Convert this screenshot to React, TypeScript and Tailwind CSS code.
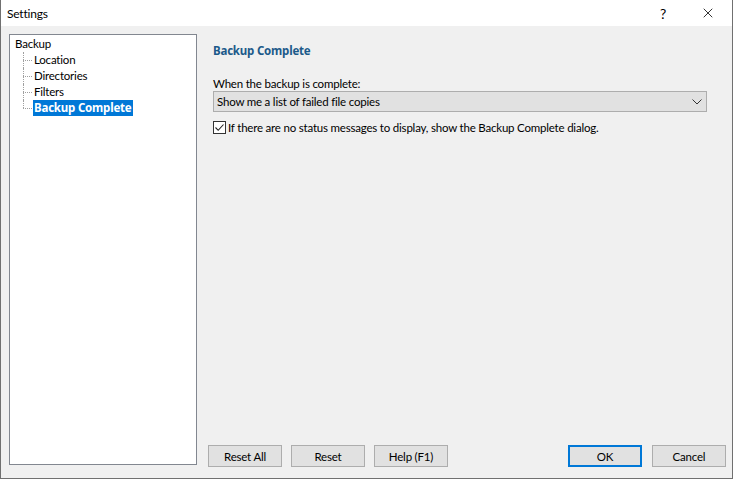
import { X } from "lucide-react";

const font = { fontFamily: 'Lato, "Noto Sans", sans-serif' };
const boldFont = { fontFamily: '"Noto Sans", sans-serif' };

function TreeItem({ label, selected, last }: { label: string; selected?: boolean; last?: boolean }) {
  return (
    <div className="relative flex h-4 items-center pl-[18px]">
      <span className={`absolute left-[8px] top-0 w-0 border-l border-dotted border-[#a0a0a0] ${last ? "h-2" : "h-4"}`} />
      <span className="absolute left-[8px] top-2 h-0 w-[9px] border-t border-dotted border-[#a0a0a0]" />
      {selected ? (
        <span className="bg-[#0078d7] px-[1px] text-[11.5px] font-bold leading-4 tracking-[-0.2px] text-white" style={boldFont}>
          {label}
        </span>
      ) : (
        <span className="px-[1px] leading-4">{label}</span>
      )}
    </div>
  );
}

function Btn({ label, primary }: { label: string; primary?: boolean }) {
  return (
    <button
      className={`flex h-[22px] w-[74px] items-center justify-center bg-[#e1e1e1] text-[11.5px] tracking-[-0.2px] text-black ${
        primary ? "border-2 border-[#0078d7]" : "border border-[#adadad]"
      }`}
    >
      {label}
    </button>
  );
}

export default function App() {
  return (
    <div
      className="flex h-[479px] w-[733px] flex-col border border-t-0 border-[#707070] bg-[#f0f0f0] text-[11.5px] leading-[15px] tracking-[-0.2px] text-black"
      style={font}
    >
      {/* Title bar */}
      <div className="flex h-[26px] shrink-0 items-center bg-white pl-[6px]">
        <span className="text-[12px]">Settings</span>
        <span className="ml-auto mr-[34px] text-[14px]">?</span>
        <X className="mr-[16px] h-4 w-4" strokeWidth={1.2} />
      </div>

      <div className="flex flex-1 pb-[13px] pl-2 pr-[6px] pt-2">
        {/* Tree */}
        <div className="w-[188px] border border-[#828790] bg-white pl-[5px] pt-[1px]">
          <div className="flex h-4 items-center leading-4">Backup</div>
          <TreeItem label="Location" />
          <TreeItem label="Directories" />
          <TreeItem label="Filters" />
          <TreeItem label="Backup Complete" selected last />
        </div>

        {/* Content */}
        <div className="flex flex-1 flex-col pl-[11px]">
          <div className="flex flex-1 flex-col pl-[5px] pr-[19px] pt-[9px]">
            <div className="h-[15px] text-[11.5px] font-bold tracking-[-0.2px] text-[#1c5a8a]" style={boldFont}>
              Backup Complete
            </div>
            <div className="mt-[18px] h-[15px]">When the backup is complete:</div>
            <div className="flex h-[21px] items-center border border-[#adadad] bg-[#e1e1e1] pl-[3px] pr-[4px]">
              <span>Show me a list of failed file copies</span>
              <svg className="ml-auto" width="10" height="6" viewBox="0 0 10 6">
                <path d="M0.5 0.5 L5 5 L9.5 0.5" fill="none" stroke="#333" strokeWidth="1" />
              </svg>
            </div>
            <label className="mt-[8px] flex h-[15px] items-center gap-[2px]">
              <span className="flex h-[13px] w-[13px] items-center justify-center border border-[#333] bg-white">
                <svg width="11" height="11" viewBox="0 0 11 11">
                  <path d="M1.5 5.5 L4.2 8.3 L9.5 2.5" fill="none" stroke="#222" strokeWidth="1.1" />
                </svg>
              </span>
              <span>If there are no status messages to display, show the Backup Complete dialog.</span>
            </label>
          </div>
          <div className="mb-[-2px] flex items-end">
            <div className="flex gap-[9px]">
              <Btn label="Reset All" />
              <Btn label="Reset" />
              <Btn label="Help (F1)" />
            </div>
            <div className="ml-auto flex gap-[10px]">
              <Btn label="OK" primary />
              <Btn label="Cancel" />
            </div>
          </div>
        </div>
      </div>
    </div>
  );
}
